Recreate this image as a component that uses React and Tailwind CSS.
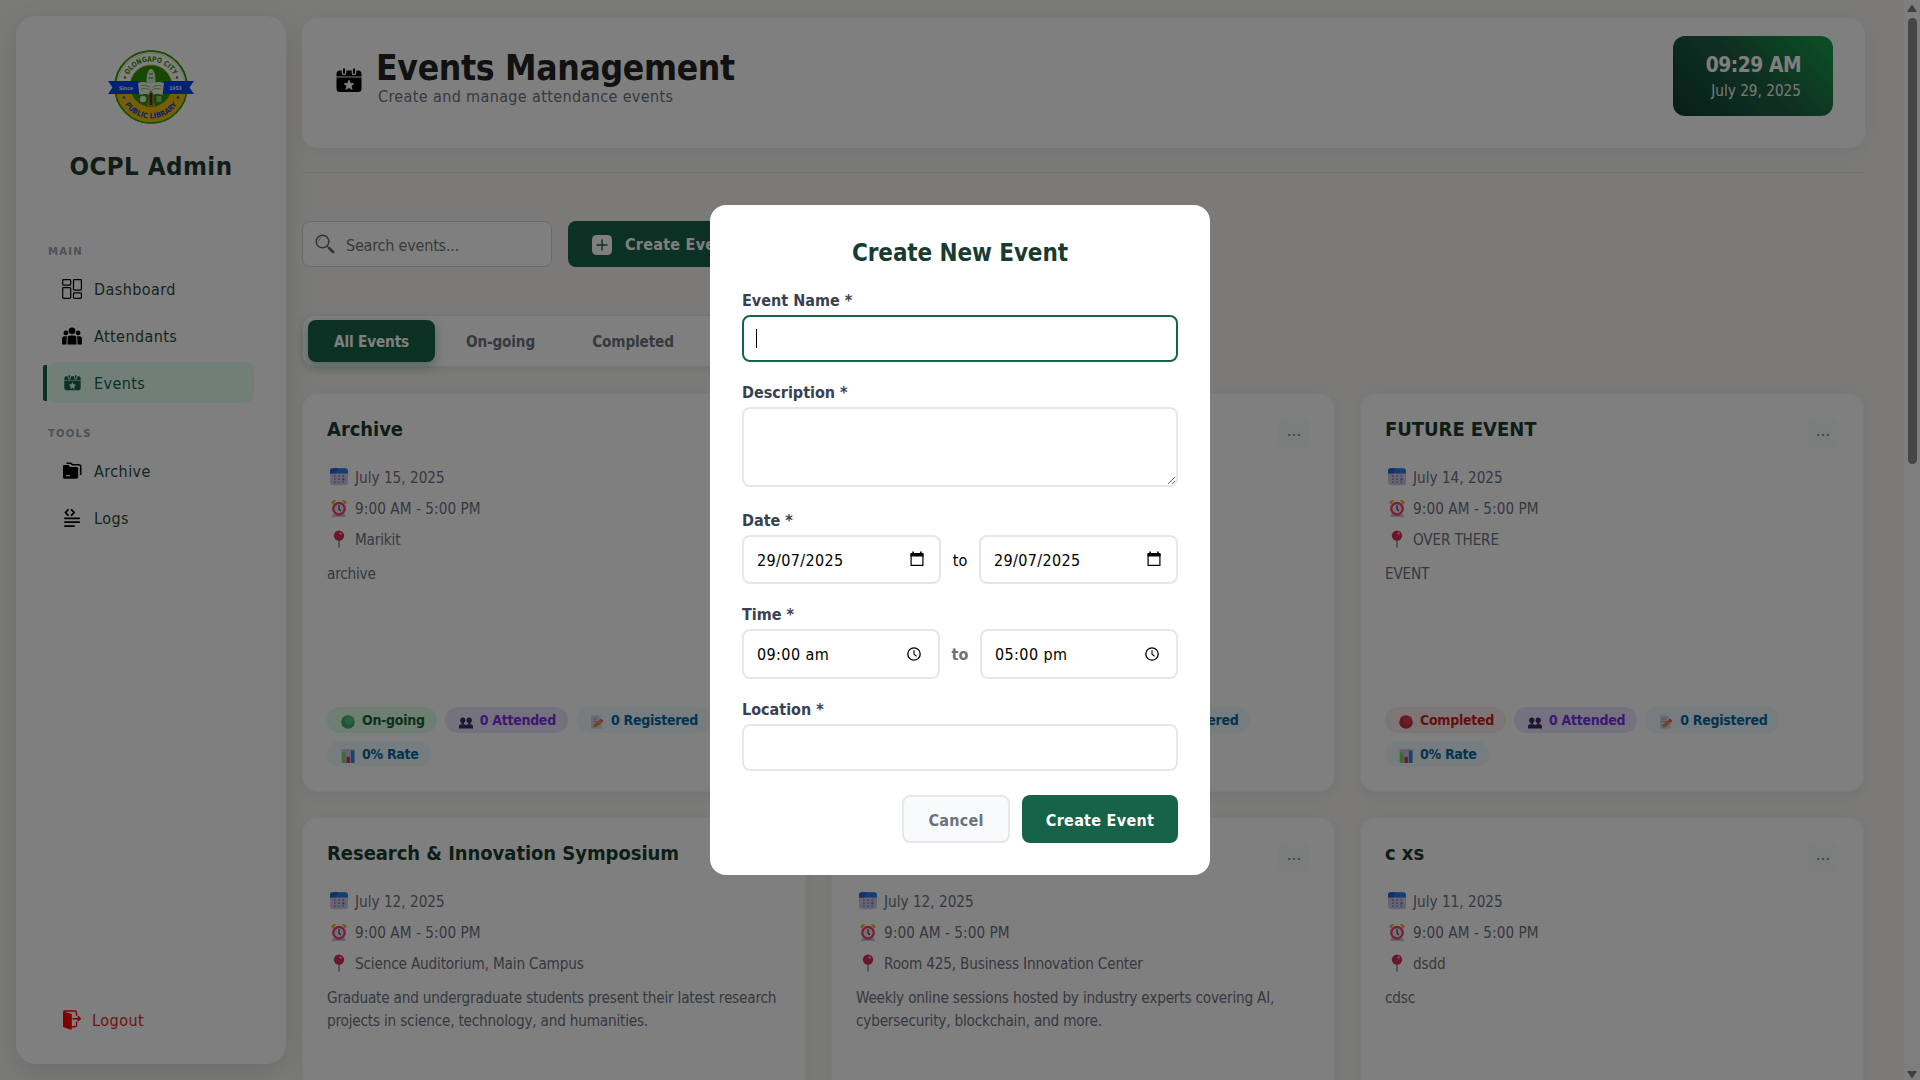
import React from "react";

function Logo() {
  return (
    <svg width="88" height="76" viewBox="0 0 88 76" className="shrink-0">
      <defs>
        <path id="arcTop" d="M18.5 38a25.5 25.5 0 0 1 51 0" />
        <path id="arcBottom" d="M12.5 38a31.5 31.5 0 0 0 63 0" />
      </defs>
      <circle cx="44" cy="38" r="36" fill="#fff" stroke="#2f9e00" strokeWidth="1.6" />
      <path d="M8.8 42a35.3 35.3 0 0 0 70.4 0z" fill="#f2bd00" />
      <circle cx="44" cy="38" r="36" fill="none" stroke="#2f9e00" strokeWidth="1.6" />
      <circle cx="44" cy="38" r="34" fill="none" stroke="#b9c96a" strokeWidth="0.5" />
      <circle cx="44" cy="37" r="21" fill="#2f9000" stroke="#c7a91c" strokeWidth="0.8" />
      <text fontSize="7.4" fontWeight="700" fill="#2f9000" fontFamily="DejaVu Sans Condensed" textAnchor="middle" textLength="55" lengthAdjust="spacingAndGlyphs">
        <textPath href="#arcTop" startOffset="50%">OLONGAPO CITY</textPath>
      </text>
      <text fontSize="7.4" fontWeight="700" fill="#1b48c8" fontFamily="DejaVu Sans Condensed" textAnchor="middle" textLength="62" lengthAdjust="spacingAndGlyphs">
        <textPath href="#arcBottom" startOffset="50%">PUBLIC LIBRARY</textPath>
      </text>
      <circle cx="18" cy="28.5" r="1.2" fill="#2f9000" />
      <circle cx="70" cy="28.5" r="1.2" fill="#2f9000" />
      <circle cx="17" cy="48.5" r="1.2" fill="#1b48c8" />
      <circle cx="71" cy="48.5" r="1.2" fill="#1b48c8" />
      <path d="M1 32h86l-4.5 6.5 4.5 6.5H1l4.5-6.5z" fill="#0540e8" />
      <path d="M32 32h24v14H32z" fill="#2f9000" />
      <path d="M39.5 32c0-6 1.500-12 4.500-12s4.500 6 4.500 12l-2 4h-5z" fill="#d9ecd0" />
      <path d="M42 25h4M41.5 29h5" stroke="#2f9000" strokeWidth="1" />
      <path d="M31 34c4-1.500 9-1.500 13 1.500 4-3 9-3 13-1.500l-1.500 12c-4-1.500-8-1.500-11.500 1-3.500-2.500-7.500-2.500-11.500-1z" fill="#eef5e6" />
      <path d="M33.500 37c3-1 6-.8 9 1M34 40c3-1 6-.8 9 1M54.500 37c-3-1-6-.8-9 1M54 40c-3-1-6-.8-9 1" stroke="#6aa84f" strokeWidth="0.8" fill="none" />
      <path d="M44 41c2 2 2.500 5 2.500 9l1.500 7h-8l1.500-7c0-4 .5-7 2.500-9z" fill="#b98a4a" />
      <path d="M42.500 44h3v12h-3z" fill="#4a3320" />
      <circle cx="36" cy="50" r="3.2" fill="#e3efdb" />
      <rect x="49.5" y="47" width="5" height="6" rx="0.6" fill="#8fc07a" />
      <text x="19" y="40.500" fontSize="5.2" fontWeight="700" fill="#e5ebff" fontFamily="DejaVu Sans Condensed" textAnchor="middle">Since</text>
      <text x="68.500" y="40.500" fontSize="5" fontWeight="700" fill="#e5ebff" fontFamily="DejaVu Sans Condensed" textAnchor="middle">1953</text>
    </svg>
  );
}

function DashboardIcon() {
  return (
    <svg width="20" height="20" viewBox="0 0 20 20" fill="none" stroke="#000" strokeWidth="1.2">
      <rect x="0.7" y="0.7" width="8" height="5.4" rx="0.8" />
      <rect x="11.5" y="0.7" width="7.9" height="10.4" rx="0.8" />
      <rect x="0.7" y="8.7" width="8" height="10.6" rx="0.8" />
      <rect x="11.5" y="13.9" width="7.9" height="5.4" rx="0.8" />
    </svg>
  );
}

function PeopleIcon() {
  return (
    <svg width="20" height="20" viewBox="0 0 20 20" fill="#000">
      <circle cx="10" cy="4.7" r="3.3" />
      <circle cx="3.9" cy="6.9" r="2.4" />
      <circle cx="16.1" cy="6.9" r="2.4" />
      <path d="M5.6 18.500v-6.300a2.700 2.700 0 0 1 2.700-2.700h3.400a2.700 2.700 0 0 1 2.700 2.700v6.300z" />
      <path d="M0 18.500v-5.600a2.600 2.600 0 0 1 2.600-2.600h2.700c-.5.700-.7 1.300-.7 2v6.200zM20 18.500v-5.600a2.600 2.600 0 0 0-2.600-2.600h-2.700c.5.700.7 1.300.7 2v6.200z" />
    </svg>
  );
}

function CalendarStarIcon({ size, color, hole }) {
  return (
    <svg width={size} height={size} viewBox="0 0 26 26" className="shrink-0">
      <path d="M0.500 9.500V7a3.500 3.500 0 0 1 3.500-3.500h18A3.500 3.500 0 0 1 25.500 7v2.500z" fill={color} />
      <path d="M0.500 10.500h25v11a3.500 3.500 0 0 1-3.500 3.500H4a3.500 3.500 0 0 1-3.500-3.500z" fill={color} />
      <path d="M8 2v4M18 2v4" stroke={hole} strokeWidth="4.6" strokeLinecap="round" />
      <path d="M8 2.300v3.600M18 2.300v3.600" stroke={color} strokeWidth="2" strokeLinecap="round" />
      <path d="M13 13l1.500 3.200 3.500.4-2.600 2.400.7 3.500-3.100-1.700-3.100 1.700.7-3.500L8 16.600l3.500-.4z" fill={hole} stroke={hole} strokeWidth="0.6" strokeLinejoin="round" />
    </svg>
  );
}

function FoldersIcon() {
  return (
    <svg width="20" height="20" viewBox="0 0 20 20">
      <path d="M4.500 2.300h4.300l1.700 1.500h6.200c1.200 0 2 .8 2 1.800V14" fill="none" stroke="#000" strokeWidth="1.6" />
      <path d="M1 5.300c0-.8.600-1.300 1.300-1.300h4l2 1.900h6.200c1 0 1.700.7 1.700 1.600v8.600c0 1-.7 1.700-1.700 1.700H2.700c-1 0-1.700-.7-1.700-1.700z" fill="#000" />
      <path d="M4.300 14.600h3.200" stroke="#fff" strokeWidth="1.1" strokeLinecap="round" />
    </svg>
  );
}

function LogsIcon() {
  return (
    <svg width="20" height="20" viewBox="0 0 20 20" fill="none" stroke="#000" strokeWidth="1.8" strokeLinecap="round" strokeLinejoin="round">
      <path d="M6 1.800L3.400 4.500 6 7.200M9.600 1.800l2.600 2.700-2.600 2.700" />
      <path d="M3 10.300h14.200M3 14.200h14.200M3 18.200h9" />
    </svg>
  );
}

function LogoutIcon() {
  return (
    <svg width="20" height="20" viewBox="0 0 20 20">
      <path d="M1 1.200L9.800 4v14.400c0 .9-.6 1.300-1.400 1.100L2.300 17.600C1.400 17.300 1 16.800 1 16z" fill="#ff0000" />
      <path d="M1.500 1h11.400c1 0 1.600.6 1.600 1.500v3.300M14.500 11.500v3.800c0 .8-.6 1.400-1.400 1.400H10" fill="none" stroke="#ff0000" strokeWidth="1.4" />
      <path d="M10.500 8.700h7.300M15.800 6.400l2.500 2.300-2.500 2.300" fill="none" stroke="#ff0000" strokeWidth="1.5" />
    </svg>
  );
}

function SearchIcon() {
  return (
    <svg width="20" height="20" viewBox="0 0 20 20" fill="none">
      <circle cx="7.5" cy="7.5" r="6.3" stroke="#6b6b6b" strokeWidth="1.6" />
      <path d="M3.700 7.500a3.800 3.800 0 0 1 3-3.900" stroke="#9a9a9a" strokeWidth="0.9" />
      <path d="M12 12l2 2" stroke="#777" strokeWidth="1.5" />
      <path d="M14.300 14.300l3.800 3.800" stroke="#6b6b6b" strokeWidth="2.8" strokeLinecap="round" />
    </svg>
  );
}

function CalendarEmoji() {
  return (
    <svg width="18" height="18" viewBox="0 0 18 18">
      <rect x="0" y="0.3" width="18" height="17" rx="3" fill="#d3c8e6" />
      <path d="M0 5.500V3.200A3 3 0 0 1 3 .2h12a3 3 0 0 1 3 3v2.300z" fill="#2b7fe0" />
      <path d="M0 5.500V3.200A3 3 0 0 1 3 .2h5L5 5.500z" fill="#2267cf" />
      <g fill="#9387b3">
        <rect x="4" y="7.2" width="1.7" height="1.7" /><rect x="8.2" y="7.2" width="1.7" height="1.7" /><rect x="12.400" y="7.2" width="1.7" height="1.7" />
        <rect x="4" y="10.3" width="1.7" height="1.7" /><rect x="8.2" y="10.3" width="1.7" height="1.7" />
        <rect x="4" y="13.4" width="1.7" height="1.7" /><rect x="8.2" y="13.4" width="1.7" height="1.7" /><rect x="12.400" y="13.4" width="1.7" height="1.7" />
      </g>
      <rect x="12.3" y="10.2" width="2.2" height="2.2" fill="#2f8df0" />
    </svg>
  );
}

function ClockEmoji() {
  return (
    <svg width="18" height="18" viewBox="0 0 18 18">
      <path d="M3 15.500h12l1 2.300H2z" fill="#c5aee0" />
      <path d="M1.500 4.500C1.200 2 3 .5 6.500 1.200L3 5.500zM16.500 4.500C16.800 2 15 .5 11.500 1.200L15 5.500z" fill="#efb42a" />
      <circle cx="9" cy="9.7" r="6.9" fill="#f0436c" />
      <circle cx="9" cy="9.7" r="4.5" fill="#efe3f2" />
      <path d="M9 6.500v3.400l1.500 1.600" fill="none" stroke="#4a3555" strokeWidth="1.2" strokeLinecap="round" />
    </svg>
  );
}

function PinEmoji() {
  return (
    <svg width="18" height="18" viewBox="0 0 18 18">
      <path d="M9 9v8" stroke="#9a93a5" strokeWidth="1.6" strokeLinecap="round" />
      <circle cx="9" cy="5.6" r="5.2" fill="#dd2a5c" />
      <circle cx="10.6" cy="3.6" r="1.4" fill="#ff8fa8" />
    </svg>
  );
}

function DotEmoji({ red }) {
  return (
    <svg width="14" height="14" viewBox="0 0 14 14">
      <circle cx="7" cy="7" r="6.8" fill={red ? "#c92f45" : "#3dab75"} />
      <circle cx="8.2" cy="5.6" r="4.2" fill={red ? "#d63c51" : "#4fc088"} />
    </svg>
  );
}

function PeopleEmoji() {
  return (
    <svg width="14" height="14" viewBox="0 0 14 14" fill="#3f2a63">
      <circle cx="3.8" cy="5.2" r="2.6" /><circle cx="10.2" cy="5.2" r="2.6" />
      <path d="M2.600 6h2.400v3H2.600zM9 6h2.400v3H9zM0 13.500v-2.200C0 10 1 9.300 2.200 9.300h3c.8 0 1.400.3 1.800.9.400-.6 1-.9 1.800-.9h3c1.200 0 2.200.7 2.200 2v2.200z" />
    </svg>
  );
}

function MemoEmoji() {
  return (
    <svg width="14" height="14" viewBox="0 0 14 14">
      <path d="M1 .5h7.500L11.500 4v9.700H1z" fill="#d8d2e4" />
      <path d="M2.800 4h4M2.800 6.500h5" stroke="#a49cb8" strokeWidth="0.9" />
      <path d="M3 12.500l1-3 6-4.800 2.200 2.500-6 4.800z" fill="#f0853a" />
      <path d="M10 4.700l1.300-.9 2 2.400-1.100 1z" fill="#e23f63" />
    </svg>
  );
}

function ChartEmoji() {
  return (
    <svg width="14" height="14" viewBox="0 0 14 14">
      <rect x="0.5" y="0" width="13" height="14" rx="1" fill="#cfc6dd" />
      <rect x="1" y="3.5" width="3.6" height="10.5" fill="#7fd06a" />
      <rect x="5.6" y="8" width="3.2" height="6" fill="#d42a63" />
      <rect x="9.9" y="1.5" width="3.6" height="12.5" fill="#2f86d8" />
    </svg>
  );
}

function NavItem({ icon, label, active }) {
  return (
    <div className="flex h-[41px] items-center">
      <span className={active ? "mr-px h-9 w-1 rounded-l-[2px] bg-[#17634a]" : "mr-px h-9 w-1"} />
      <div className={active ? "flex h-full flex-1 items-center rounded-lg bg-[#e4fcf0] pl-[14px] text-[#17634a]" : "flex h-full flex-1 items-center pl-[14px]"}>
        <span className="flex w-5 justify-center">{icon}</span>
        <span className="ml-3 pt-[2px] tracking-[0.42px]">{label}</span>
      </div>
    </div>
  );
}

function Badge({ tone, icon, children }) {
  const tones = {
    green: "bg-[#dcfce7] text-[#166534]",
    red: "bg-[#fdecec] text-[#c81e1e]",
    purple: "bg-[#ebe4ff] text-[#7c2ee0]",
    blue: "bg-[#eff8ff] text-[#0369a1]",
  };
  return (
    <span className={"flex h-[26px] items-center gap-[7px] rounded-full pl-[14px] pr-[12px] text-[14px] font-bold tracking-[-0.28px] " + tones[tone]}>
      <span className="pt-[3px]">{icon}</span>
      <span className="whitespace-nowrap">{children}</span>
    </span>
  );
}

function InfoRow({ icon, children }) {
  return (
    <div className="flex h-[31px] items-center pl-[3px]">
      {icon}
      <span className="ml-[7px] whitespace-nowrap pt-[3px]">{children}</span>
    </div>
  );
}

function EventCard({ title, date, place, text, done, badges }) {
  return (
    <article className="flex h-[399px] flex-col rounded-2xl border border-[#f5f6f7] bg-white px-6 pb-6 pt-[23px] shadow-[0_4px_16px_rgba(0,0,0,0.06)]">
      <div className="flex h-8 justify-between">
        <h3 className="mt-[-2px] text-[20px] font-bold leading-[28px] tracking-[-0.05px] text-[#1a3c30]">{title}</h3>
        <span className="flex h-8 w-8 items-center justify-center rounded-lg bg-[#f9fafb] pt-[3px] text-[16px] text-[#6b7280]">⋯</span>
      </div>
      <div className="mt-[12px] text-[15.2px] leading-[20px] text-[#6b7280]">
        <InfoRow icon={<CalendarEmoji />}>{date}</InfoRow>
        <InfoRow icon={<ClockEmoji />}><span className="tracking-[0.05px]">9:00 AM - 5:00 PM</span></InfoRow>
        <InfoRow icon={<PinEmoji />}><span className="tracking-[-0.18px]">{place}</span></InfoRow>
      </div>
      <p className="mt-[9px] text-[15.2px] leading-[23px] tracking-[-0.205px] text-[#6b7280]">{text}</p>
      {badges && (
        <div className="mt-auto flex flex-wrap gap-2">
          {done ? <Badge tone="red" icon={<DotEmoji red />}>Completed</Badge> : <Badge tone="green" icon={<DotEmoji />}>On-going</Badge>}
          <Badge tone="purple" icon={<PeopleEmoji />}>0 Attended</Badge>
          <Badge tone="blue" icon={<MemoEmoji />}>0 Registered</Badge>
          <Badge tone="blue" icon={<ChartEmoji />}>0% Rate</Badge>
        </div>
      )}
    </article>
  );
}

const events = [
  { title: "Archive", date: "July 15, 2025", place: "Marikit", text: "archive", badges: true },
  { title: "", date: "July 15, 2025", place: "", text: "", done: true, badges: true },
  { title: "FUTURE EVENT", date: "July 14, 2025", place: "OVER THERE", text: "EVENT", done: true, badges: true },
  { title: "Research & Innovation Symposium", date: "July 12, 2025", place: "Science Auditorium, Main Campus", text: "Graduate and undergraduate students present their latest research projects in science, technology, and humanities." },
  { title: "", date: "July 12, 2025", place: "Room 425, Business Innovation Center", text: "Weekly online sessions hosted by industry experts covering AI, cybersecurity, blockchain, and more." },
  { title: "c xs", date: "July 11, 2025", place: "dsdd", text: "cdsc" },
];

function DateGlyph() {
  return (
    <svg width="14" height="16" viewBox="0 0 14 16" className="mb-[2px]">
      <path d="M1.100 3v11.300h11.800V3" fill="none" stroke="#000" strokeWidth="1.2" />
      <path d="M0.500 2h13v3.400H0.500zM2.300.5h1.600V3H2.300zM10.100.5h1.600V3h-1.600z" fill="#000" />
    </svg>
  );
}

function TimeGlyph() {
  return (
    <svg width="14" height="14" viewBox="0 0 14 14" fill="none" stroke="#000">
      <circle cx="7" cy="7" r="6.2" strokeWidth="1.3" />
      <path d="M7 3.300v4l2.600 1.900" strokeWidth="1.1" />
    </svg>
  );
}

function Label({ children }) {
  return <div className="h-5 pt-px font-bold leading-5 text-[#374151]">{children}</div>;
}

function Modal() {
  return (
    <div className="flex h-[670px] w-[500px] flex-col rounded-2xl bg-white px-8 pt-[30px]">
      <h2 className="text-center text-[24px] font-bold leading-9 tracking-[-0.11px] text-[#1a3c30]">Create New Event</h2>
      <div className="mt-[19px]"><Label>Event Name *</Label></div>
      <div className="mt-[5px] flex h-[47px] items-center rounded-lg border-2 border-[#17634a] pl-3">
        <span className="h-[19px] w-px bg-black" />
      </div>
      <div className="mt-5"><Label>Description *</Label></div>
      <textarea className="mt-[5px] block h-20 w-full shrink-0 resize-y rounded-lg border-2 border-[#e5e7eb] outline-none" />
      <div className="mt-[23px]"><Label>Date *</Label></div>
      <div className="mt-[5px] flex h-[49px] items-center justify-between text-black">
        <div className="flex h-full w-[199px] items-center justify-between rounded-lg border-2 border-[#e5e7eb] pl-[13px] pr-[15px]">
          <span className="pt-[2px] tracking-[0.35px]">29/07/2025</span><DateGlyph />
        </div>
        <span className="pt-[2px]">to</span>
        <div className="flex h-full w-[199px] items-center justify-between rounded-lg border-2 border-[#e5e7eb] pl-[13px] pr-[15px]">
          <span className="pt-[2px] tracking-[0.35px]">29/07/2025</span><DateGlyph />
        </div>
      </div>
      <div className="mt-5"><Label>Time *</Label></div>
      <div className="mt-[5px] flex h-[50px] items-center justify-between text-black">
        <div className="flex h-full w-[198px] items-center justify-between rounded-lg border-2 border-[#e5e7eb] pl-[13px] pr-[17px]">
          <span className="pt-px tracking-[0.4px]">09:00 am</span><TimeGlyph />
        </div>
        <span className="pt-px font-bold text-[#6b7280]">to</span>
        <div className="flex h-full w-[198px] items-center justify-between rounded-lg border-2 border-[#e5e7eb] pl-[13px] pr-[17px]">
          <span className="pt-px tracking-[0.4px]">05:00 pm</span><TimeGlyph />
        </div>
      </div>
      <div className="mt-5"><Label>Location *</Label></div>
      <div className="mt-[5px] h-[47px] rounded-lg border-2 border-[#e5e7eb]" />
      <div className="mt-6 flex h-12 justify-end gap-3 font-bold">
        <button className="w-[108px] rounded-lg border-2 border-[#e5e7eb] bg-[#f8fafc] pt-[3px] tracking-[0.25px] text-[#6b7280]">Cancel</button>
        <button className="w-[156px] rounded-lg bg-[#17634a] pt-[3px] tracking-[0.28px] text-white">Create Event</button>
      </div>
    </div>
  );
}

export default function App() {
  return (
    <div className="relative flex h-[1080px] w-[1920px] overflow-hidden bg-[#f6f5f1] font-['DejaVu_Sans_Condensed','DejaVu_Sans',sans-serif] text-[16px] leading-6">
      <aside className="ml-4 mt-4 flex h-[1048px] w-[270px] shrink-0 flex-col rounded-[20px] bg-white pt-[33px] text-[#2d4a3e] shadow-[0_8px_32px_rgba(0,0,0,0.12)]">
        <div className="flex justify-center"><Logo /></div>
        <h1 className="mt-[25px] text-center text-[25.6px] font-bold leading-8 tracking-[0.45px] text-[#1a3c30]">OCPL Admin</h1>
        <nav className="mt-[62px] pl-[27px] pr-8">
          <div className="pl-[5px] text-[11.2px] font-bold leading-4 tracking-[1.2px] text-[#9ca3af]">MAIN</div>
          <div className="mt-2 flex flex-col gap-[6px]">
            <NavItem icon={<DashboardIcon />} label="Dashboard" />
            <NavItem icon={<PeopleIcon />} label="Attendants" />
            <NavItem active icon={<CalendarStarIcon size={17} color="#17634a" hole="#e4fcf0" />} label="Events" />
          </div>
          <div className="mt-[23px] pl-[5px] text-[11.2px] font-bold leading-4 tracking-[1.2px] text-[#9ca3af]">TOOLS</div>
          <div className="mt-2 flex flex-col gap-[6px]">
            <NavItem icon={<FoldersIcon />} label="Archive" />
            <NavItem icon={<LogsIcon />} label="Logs" />
          </div>
        </nav>
        <div className="mb-8 mt-auto flex h-6 items-center gap-[10px] pl-[46px] text-[#dc2626]">
          <LogoutIcon />
          <span className="pt-px tracking-[0.5px]">Logout</span>
        </div>
      </aside>

      <main className="ml-4 mt-[18px] w-[1563px] shrink-0">
        <header className="flex h-[130px] rounded-2xl bg-white pl-[34px] pr-8 pt-[18px] shadow-[0_4px_20px_rgba(0,0,0,0.05)]">
          <div className="mt-[31px]"><CalendarStarIcon size={26} color="#000" hole="#fff" /></div>
          <div className="ml-[14px] flex-1">
            <h2 className="mt-[12px] text-[35.2px] font-bold leading-[40px] tracking-[-0.32px] text-[#222]">Events Management</h2>
            <p className="mt-[-3px] pl-[2px] leading-6 tracking-[0.37px] text-[#6b7280]">Create and manage attendance events</p>
          </div>
          <div className="h-20 w-40 rounded-xl bg-[linear-gradient(45deg,#0a3d2e_0%,#1f5c44_45%,#1f5c44_50%,#16a34a_100%)] pr-8 pt-[15px] text-right text-white">
            <div className="text-[20.8px] font-bold leading-[28px] tracking-[-0.5px]">09:29 AM</div>
            <div className="pt-px text-[15.2px] leading-[23px] text-[#f1f1f1]">July 29, 2025</div>
          </div>
        </header>
        <hr className="mt-6 border-[#e5e7eb]" />

        <div className="mt-12 flex gap-4">
          <div className="flex h-[46px] w-[250px] items-center rounded-lg border border-[#d1d5db] bg-white pl-3 text-[#757575]">
            <SearchIcon />
            <span className="ml-[11px] pt-[3px] tracking-[-0.2px]">Search events...</span>
          </div>
          <div className="flex h-[46px] w-[190px] items-center rounded-lg bg-[#17634a] pl-6 font-bold text-white">
            <svg width="20" height="20" viewBox="0 0 20 20" className="mt-[2px]">
              <rect width="20" height="20" rx="4.5" fill="#fff" />
              <path d="M10 4.500v11M4.500 10h11" stroke="#17634a" strokeWidth="1.5" />
            </svg>
            <span className="ml-[13px] whitespace-nowrap pt-px tracking-[0.26px]">Create Event</span>
          </div>
        </div>

        <div className="mt-12 flex h-[52px] w-[545px] gap-1 rounded-xl border border-[#e8eaed] bg-white p-1 pl-[5px] text-[15.2px] font-bold tracking-[-0.16px] text-[#6b7280] shadow-[0_2px_10px_rgba(0,0,0,0.08)]">
          <span className="flex h-[42px] w-[127px] items-center justify-center rounded-lg bg-[#17634a] pt-[2px] text-white shadow-[0_4px_12px_rgba(23,99,74,0.35)]">All Events</span>
          <span className="flex h-[42px] w-[123px] items-center justify-center pt-[2px]">On-going</span>
          <span className="flex h-[42px] w-[134px] items-center justify-center pt-[2px]">Completed</span>
        </div>

        <div className="mt-[26px] grid w-[1562px] grid-cols-3 gap-x-[25px] gap-y-[25px]">
          {events.map((event, i) => (
            <EventCard key={i} {...event} />
          ))}
        </div>
      </main>

      <div className="ml-auto flex w-4 flex-col items-center bg-[#fcfcfc] pt-[5px]">
        <svg width="10" height="8" viewBox="0 0 10 8"><path d="M4.200.6a1 1 0 0 1 1.600 0L9.500 6c.4.600 0 1-.7 1H1.200C.5 7 .1 6.600.5 6z" fill="#7d7d7d" /></svg>
        <div className="mt-[5px] h-[446px] w-[9px] rounded-full bg-[#8b8b8b]" />
        <svg width="10" height="8" viewBox="0 0 10 8" className="mb-[2px] mt-auto rotate-180"><path d="M4.200.6a1 1 0 0 1 1.600 0L9.500 6c.4.600 0 1-.7 1H1.200C.5 7 .1 6.600.5 6z" fill="#7d7d7d" /></svg>
      </div>

      <div className="absolute inset-0 flex items-center justify-center bg-black/50">
        <Modal />
      </div>
    </div>
  );
}
